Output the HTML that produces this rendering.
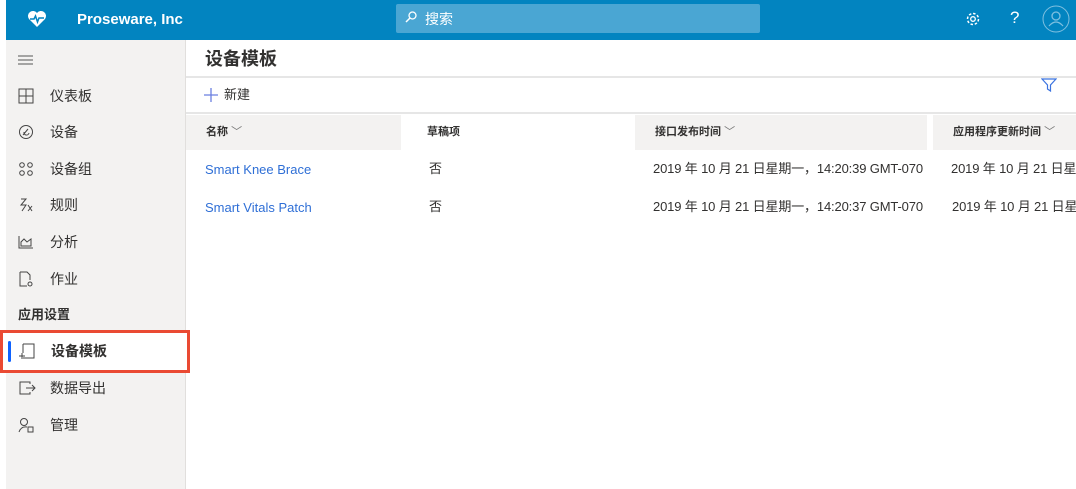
<!DOCTYPE html>
<html><head><meta charset="utf-8"><style>
*{margin:0;padding:0;box-sizing:border-box}
body{width:1076px;height:489px;overflow:hidden;background:#fff;font-family:"Liberation Sans","Noto Sans CJK SC",sans-serif;position:relative;color:#323130}
.hdr{position:absolute;left:6px;top:0;width:1070px;height:40px;background:#0284c0}
.abs{position:absolute}
.side{position:absolute;left:6px;top:40px;width:180px;height:449px;background:#f3f2f1;border-right:1px solid #e1dfdd}
.nav{position:absolute;left:50px;font-size:14px;color:#323130;line-height:16px}
.ic{position:absolute;left:18px}
.th{position:absolute;top:115px;height:35px;background:#f3f2f1;font-size:11px;font-weight:bold;color:#323130;line-height:35px;padding-left:20px}
.td{position:absolute;font-size:13px;color:#323130;line-height:16px;height:16px}
.dt{letter-spacing:-0.15px}
.lnk{color:#2f6fd6}
</style></head><body>
<div class="hdr"></div>
<svg class="abs" style="left:27px;top:10px" width="20" height="18" viewBox="0 0 20 18"><path d="M10 17 L2 9 A4.5 4.5 0 0 1 10 3 A4.5 4.5 0 0 1 18 9 Z" fill="#fff"/><path d="M3 9 H7 L8.5 6 L10.5 12 L12 8 H17" stroke="#0284c0" stroke-width="1.5" fill="none"/></svg>
<div class="abs" style="left:77px;top:11px;color:#fff;font-weight:bold;font-size:15px">Proseware, Inc</div>
<div class="abs" style="left:396px;top:4px;width:364px;height:29px;background:#4aa6d3;border-radius:2px"></div>
<svg class="abs" style="left:405px;top:11px" width="12" height="12" viewBox="0 0 12 12"><circle cx="7.5" cy="4.5" r="3.5" stroke="#fff" fill="none" stroke-width="1.3"/><path d="M5 7 L1 11" stroke="#fff" stroke-width="1.5"/></svg>
<div class="abs" style="left:425px;top:9px;color:#fff;font-size:14px">搜索</div>
<svg class="abs" style="left:964px;top:10px" width="18" height="18" viewBox="0 0 18 18"><circle cx="9" cy="9" r="5.5" stroke="#fff" fill="none" stroke-width="1.5" stroke-dasharray="2.5 1.8"/><circle cx="9" cy="9" r="2.3" stroke="#fff" fill="none" stroke-width="1.3"/></svg>
<div class="abs" style="left:1010px;top:8px;color:#fff;font-size:17px">?</div>
<svg class="abs" style="left:1042px;top:5px" width="28" height="28" viewBox="0 0 28 28"><circle cx="14" cy="14" r="13" stroke="#7fc0e0" fill="none" stroke-width="1"/><circle cx="14" cy="11" r="4" stroke="#7fc0e0" fill="none" stroke-width="1.3"/><path d="M7 21 Q14 13 21 21" stroke="#7fc0e0" fill="none" stroke-width="1.3"/></svg>

<div class="side"></div>
<svg class="abs" style="left:18px;top:55px" width="16" height="10"><path d="M0 1H15M0 5H15M0 9H15" stroke="#555" stroke-width="1"/></svg>
<svg class="ic" style="top:88px" width="16" height="16"><path d="M1 1H15V15H1ZM1 8H15M8 1V15" stroke="#444" fill="none"/></svg><div class="nav" style="top:88px">仪表板</div>
<svg class="ic" style="top:124px" width="16" height="16"><circle cx="8" cy="8" r="6.5" stroke="#444" fill="none"/><path d="M5 11 L10 5 M6 8 A2.5 2.5 0 0 0 11 9" stroke="#444" fill="none"/></svg><div class="nav" style="top:124px">设备</div>
<svg class="ic" style="top:161px" width="16" height="16"><circle cx="4" cy="4" r="2.3" stroke="#444" fill="none"/><circle cx="12" cy="4" r="2.3" stroke="#444" fill="none"/><circle cx="4" cy="12" r="2.3" stroke="#444" fill="none"/><circle cx="12" cy="12" r="2.3" stroke="#444" fill="none"/></svg><div class="nav" style="top:161px">设备组</div>
<svg class="ic" style="top:197px" width="16" height="16"><path d="M3 2 L8 2 L3 8 L8 8 L4 14 M10 8 L14 14 M10 14 L14 9" stroke="#444" fill="none"/></svg><div class="nav" style="top:197px">规则</div>
<svg class="ic" style="top:234px" width="16" height="16"><path d="M1 2V14H15M3 12V8L6 5L9 8L13 5V12Z" stroke="#444" fill="none"/></svg><div class="nav" style="top:234px">分析</div>
<svg class="ic" style="top:271px" width="16" height="16"><path d="M2 1H9L12 4V9M2 1V15H9" stroke="#444" fill="none"/><circle cx="12" cy="13" r="2" stroke="#444" fill="none"/></svg><div class="nav" style="top:271px">作业</div>
<div class="abs" style="left:18px;top:307px;font-size:13px;font-weight:bold;line-height:16px">应用设置</div>
<div class="abs" style="left:6px;top:333px;width:180px;height:38px;background:#fff"></div>
<div class="abs" style="left:8px;top:341px;width:3px;height:21px;background:#0f62fe;border-radius:2px"></div>
<svg class="ic" style="top:343px" width="18" height="16"><path d="M5 1H16V15H5M5 1V10M1 13H7M4 10V16" stroke="#444" fill="none"/></svg>
<div class="nav" style="top:343px;left:51px;font-weight:bold">设备模板</div>
<div class="abs" style="left:0;top:330px;width:190px;height:43px;border:3px solid #ea4a33"></div>
<svg class="ic" style="top:380px" width="18" height="16"><path d="M12 4V2H2V14H12V12M8 8H17M14 5L17 8L14 11" stroke="#444" fill="none"/></svg><div class="nav" style="top:380px">数据导出</div>
<svg class="ic" style="top:417px" width="16" height="16"><circle cx="6" cy="5" r="3.5" stroke="#444" fill="none"/><path d="M1 15 Q3 9 9 10" stroke="#444" fill="none"/><rect x="10" y="10" width="5" height="5" stroke="#444" fill="none"/></svg><div class="nav" style="top:417px">管理</div>

<div class="abs" style="left:205px;top:48px;font-size:18px;font-weight:bold;line-height:22px">设备模板</div>
<div class="abs" style="left:186px;top:76px;width:890px;height:2px;background:#e6e6e6"></div>
<svg class="abs" style="left:204px;top:88px" width="14" height="14"><path d="M7 0V14M0 7H14" stroke="#6b7fe0" stroke-width="1.3"/></svg>
<div class="abs" style="left:224px;top:87px;font-size:13px;line-height:16px">新建</div>
<svg class="abs" style="left:1041px;top:78px" width="16" height="14"><path d="M1 1H15L9.5 7V13L6.5 11V7Z" stroke="#3b73e0" fill="none" stroke-width="1.2"/></svg>
<div class="abs" style="left:186px;top:112px;width:890px;height:2px;background:#e6e6e6"></div>
<div class="th" style="left:186px;width:215px">名称 <span style="font-weight:normal;color:#777">﹀</span></div>
<div class="th" style="left:407px;width:222px;background:#fff">草稿项</div>
<div class="th" style="left:635px;width:292px">接口发布时间 <span style="font-weight:normal;color:#777">﹀</span></div>
<div class="th" style="left:933px;width:143px">应用程序更新时间 <span style="font-weight:normal;color:#777">﹀</span></div>
<div class="td lnk" style="left:205px;top:162px">Smart Knee Brace</div>
<div class="td" style="left:429px;top:161px">否</div>
<div class="td dt" style="left:653px;top:161px;white-space:nowrap">2019 年 10 月 21 日星期一，14:20:39 GMT-070</div>
<div class="td dt" style="left:951px;top:161px;white-space:nowrap">2019 年 10 月 21 日星期一</div>
<div class="td lnk" style="left:205px;top:200px">Smart Vitals Patch</div>
<div class="td" style="left:429px;top:199px">否</div>
<div class="td dt" style="left:653px;top:199px;white-space:nowrap">2019 年 10 月 21 日星期一，14:20:37 GMT-070</div>
<div class="td dt" style="left:952px;top:199px;white-space:nowrap">2019 年 10 月 21 日星期一</div>
</body></html>
